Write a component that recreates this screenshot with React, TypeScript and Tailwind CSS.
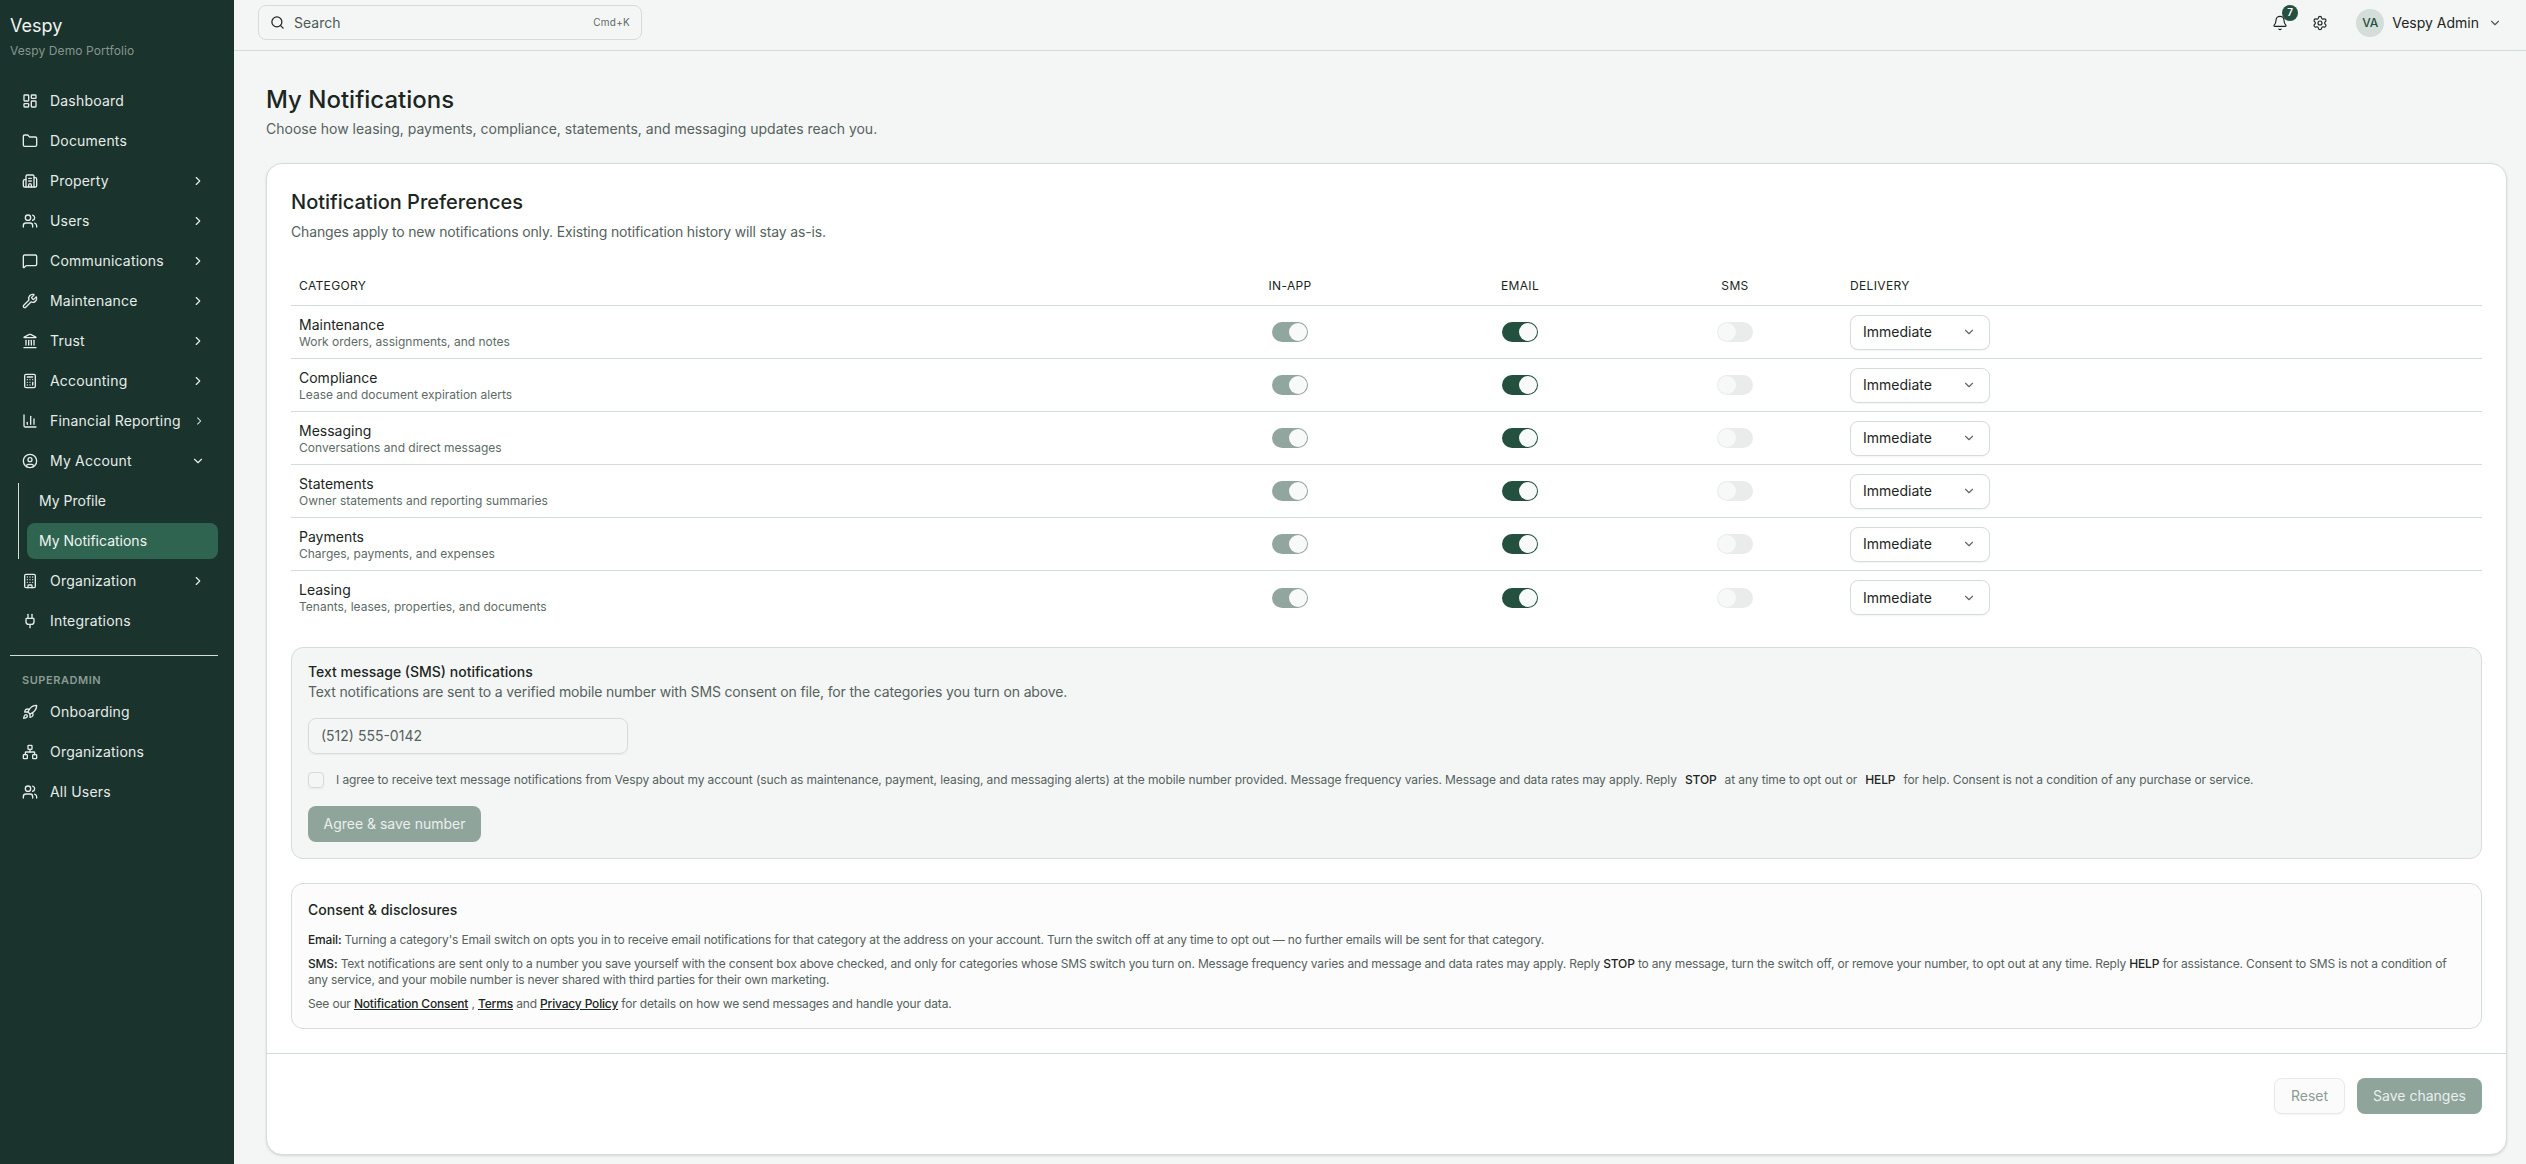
import {
  Bell,
  Building,
  Building2,
  Calculator,
  ChartColumn,
  ChevronDown,
  ChevronRight,
  CircleUser,
  Folder,
  Landmark,
  LayoutDashboard,
  MessageSquare,
  Network,
  Plug,
  Rocket,
  Search,
  Settings,
  Users,
  Wrench,
} from 'lucide-react';

const nav = [
  { label: 'Dashboard', icon: LayoutDashboard },
  { label: 'Documents', icon: Folder },
  { label: 'Property', icon: Building2, more: true },
  { label: 'Users', icon: Users, more: true },
  { label: 'Communications', icon: MessageSquare, more: true },
  { label: 'Maintenance', icon: Wrench, more: true },
  { label: 'Trust', icon: Landmark, more: true },
  { label: 'Accounting', icon: Calculator, more: true },
  { label: 'Financial Reporting', icon: ChartColumn, more: true },
];

const categories = [
  { name: 'Maintenance', desc: 'Work orders, assignments, and notes' },
  { name: 'Compliance', desc: 'Lease and document expiration alerts' },
  { name: 'Messaging', desc: 'Conversations and direct messages' },
  { name: 'Statements', desc: 'Owner statements and reporting summaries' },
  { name: 'Payments', desc: 'Charges, payments, and expenses' },
  { name: 'Leasing', desc: 'Tenants, leases, properties, and documents' },
];

const NavItem = ({ label, icon: Icon, more }: { label: string; icon: typeof Users; more?: boolean }) => (
  <div className="flex h-9 items-center gap-3 rounded-lg px-3 text-sm tracking-[0.2px] text-[#e6ece9]">
    <Icon size={16} strokeWidth={2} className="shrink-0" />
    <span className="flex-1 whitespace-nowrap">{label}</span>
    {more && <ChevronRight size={14} className="mr-px" />}
  </div>
);

const Toggle = ({ state }: { state: 'muted' | 'on' | 'off' }) => {
  if (state === 'off') {
    return (
      <div className="flex h-5 w-9 items-center rounded-full bg-[#e9eceb] pl-px">
        <div className="size-[18px] rounded-full bg-[#f7f8f8]" />
      </div>
    );
  }
  return (
    <div
      className={
        state === 'on'
          ? 'flex h-5 w-9 items-center justify-end rounded-full bg-[#24503f] pr-px'
          : 'flex h-5 w-9 items-center justify-end rounded-full bg-[#91a69e] pr-px'
      }
    >
      <div className="size-[18px] rounded-full bg-[#f8faf9]" />
    </div>
  );
};

export default function App() {
  return (
    <div className="flex h-screen overflow-hidden bg-[#f4f6f5] font-['Inter',sans-serif] text-[#1b2622]">
      {/* Sidebar */}
      <aside className="flex w-[234px] shrink-0 flex-col bg-[#1a332c] pl-[10px] pr-4">
        <div className="pt-[14px]">
          <div className="text-lg leading-[24px] text-[#f1f4f3]">Vespy</div>
          <div className="mt-[5px] text-xs leading-[16px] tracking-[0.1px] text-[#84968f]">Vespy Demo Portfolio</div>
        </div>
        <nav className="mt-6 flex flex-col gap-1">
          {nav.map((item) => (
            <NavItem key={item.label} {...item} />
          ))}
          <div className="flex h-9 items-center gap-3 rounded-lg px-3 text-sm tracking-[0.2px] text-[#e6ece9]">
            <CircleUser size={16} strokeWidth={2} className="shrink-0" />
            <span className="flex-1">My Account</span>
            <ChevronDown size={14} className="mr-px" />
          </div>
          <div className="ml-2 flex flex-col gap-1 border-l border-[#d5ddd9] pl-2">
            <div className="flex h-9 items-center rounded-lg px-3 text-sm text-[#e6ece9]">My Profile</div>
            <div className="flex h-9 items-center rounded-lg bg-[#2f6450] px-3 text-sm text-[#f1f4f3]">My Notifications</div>
          </div>
          <NavItem label="Organization" icon={Building} more />
          <NavItem label="Integrations" icon={Plug} />
        </nav>
        <div className="mt-4 border-t border-[#d5ddd9]" />
        <div className="mt-4 px-3 text-[11px] font-semibold leading-4 tracking-[0.05em] text-[#8b9c95]">SUPERADMIN</div>
        <div className="mt-[6px] flex flex-col gap-1">
          <NavItem label="Onboarding" icon={Rocket} />
          <NavItem label="Organizations" icon={Network} />
          <NavItem label="All Users" icon={Users} />
        </div>
      </aside>

      <div className="flex min-w-0 flex-1 flex-col">
        {/* Top bar */}
        <header className="flex h-[51px] shrink-0 items-center border-b border-[#d5ddd9] pb-[5px] pl-6 pr-6">
          <div className="flex h-[35px] w-[384px] items-center gap-[9px] rounded-lg border border-[#d5ddd9] px-[11px] text-sm text-[#4c5a55]">
            <Search size={15} className="text-[#1b2622]" />
            <span className="flex-1">Search</span>
            <span className="text-[10px] tracking-wide text-[#5d6b66]">Cmd+K</span>
          </div>
          <div className="ml-auto flex items-center">
            <div className="relative">
              <Bell size={16} strokeWidth={1.75} />
              <span className="absolute -right-[10px] -top-[10px] flex size-4 items-center justify-center rounded-full bg-[#24503f] text-[10px] font-semibold text-white">
                7
              </span>
            </div>
            <Settings size={16} strokeWidth={1.75} className="ml-6" />
            <div className="ml-7 flex size-7 items-center justify-center rounded-full bg-[#d5ddd9] text-xs font-medium text-[#24503f]">VA</div>
            <span className="ml-2 text-sm">Vespy Admin</span>
            <ChevronDown size={14} className="ml-[9px] text-[#4c5a55]" />
          </div>
        </header>

        {/* Page */}
        <main className="flex-1 pl-8 pr-[19px] pt-[33px]">
          <h1 className="text-2xl font-medium leading-[32px]">My Notifications</h1>
          <p className="mt-[3px] text-sm leading-5 text-[#55625d]">
            Choose how leasing, payments, compliance, statements, and messaging updates reach you.
          </p>

          <section className="mt-6 h-[992px] rounded-2xl border border-[#d5ddd9] bg-white shadow-sm">
            <div className="px-6 pt-6">
              <h2 className="text-xl font-medium leading-7">Notification Preferences</h2>
              <p className="mt-[6px] text-sm leading-5 tracking-[-0.15px] text-[#55625d]">
                Changes apply to new notifications only. Existing notification history will stay as-is.
              </p>

              {/* Preferences table */}
              <div className="mt-[25px]">
                <div className="grid h-[39px] grid-cols-[884px_230px_230px_200px_1fr] items-center border-b border-[#d5ddd9] text-xs tracking-[0.03em]">
                  <div className="pl-2">CATEGORY</div>
                  <div className="text-center">IN-APP</div>
                  <div className="text-center">EMAIL</div>
                  <div className="text-center">SMS</div>
                  <div className="pl-[15px]">DELIVERY</div>
                </div>
                {categories.map((c, i) => (
                  <div
                    key={c.name}
                    className={
                      i < categories.length - 1
                        ? 'grid h-[53px] grid-cols-[884px_230px_230px_200px_1fr] items-center border-b border-[#d5ddd9]'
                        : 'grid h-[53px] grid-cols-[884px_230px_230px_200px_1fr] items-center'
                    }
                  >
                    <div className="pl-2">
                      <div className="text-sm leading-[17px]">{c.name}</div>
                      <div className="mt-px text-xs leading-[15px] text-[#5d6b66]">{c.desc}</div>
                    </div>
                    <div className="flex justify-center">
                      <Toggle state="muted" />
                    </div>
                    <div className="flex justify-center">
                      <Toggle state="on" />
                    </div>
                    <div className="flex justify-center">
                      <Toggle state="off" />
                    </div>
                    <div className="pl-[15px]">
                      <div className="flex h-[35px] w-[140px] items-center justify-between rounded-lg border border-[#d5ddd9] bg-white pl-3 pr-[13px] text-sm shadow-xs">
                        Immediate
                        <ChevronDown size={14} className="text-[#5d6b66]" />
                      </div>
                    </div>
                  </div>
                ))}
              </div>

              {/* SMS opt-in */}
              <div className="mt-[23px] h-[212px] rounded-xl border border-[#d5ddd9] bg-[#f4f6f5] px-4 pt-[14px]">
                <div className="text-sm font-medium leading-5">Text message (SMS) notifications</div>
                <div className="text-sm leading-5 tracking-[-0.15px] text-[#55625d]">
                  Text notifications are sent to a verified mobile number with SMS consent on file, for the categories you turn on above.
                </div>
                <div className="mt-4 flex h-[36px] w-[320px] items-center rounded-lg border border-[#d5ddd9] px-3 text-sm text-[#55625d] shadow-xs">
                  (512) 555-0142
                </div>
                <div className="mt-[18px] flex items-center gap-3 text-xs tracking-[-0.1px] text-[#55625d]">
                  <div className="size-4 rounded border border-[#d5ddd9] shadow-xs" />
                  <span>
                    I agree to receive text message notifications from Vespy about my account (such as maintenance, payment, leasing, and messaging alerts) at the mobile number provided. Message frequency varies. Message and data rates may apply. Reply
                    <b className="mx-2 font-medium text-[#1b2622]">STOP</b>
                    at any time to opt out or
                    <b className="mx-2 font-medium text-[#1b2622]">HELP</b>
                    for help. Consent is not a condition of any purchase or service.
                  </span>
                </div>
                <div className="mt-[18px] flex h-9 w-[173px] items-center justify-center rounded-lg bg-[#8fa59c] text-sm text-[#e9efec]">
                  Agree &amp; save number
                </div>
              </div>

              {/* Consent */}
              <div className="mt-6 h-[146px] rounded-xl border border-[#d5ddd9] bg-[#fcfcfc] px-4 pt-4 text-xs leading-4 tracking-[-0.17px] text-[#55625d]">
                <div className="text-sm font-medium leading-5 tracking-normal text-[#1b2622]">Consent &amp; disclosures</div>
                <p className="mt-3">
                  <b className="font-medium text-[#1b2622]">Email:</b> Turning a category's Email switch on opts you in to receive email notifications for that category at the address on your account. Turn the switch off at any time to opt out — no further emails will be sent for that category.
                </p>
                <p className="mt-2">
                  <b className="font-medium text-[#1b2622]">SMS:</b> Text notifications are sent only to a number you save yourself with the consent box above checked, and only for categories whose SMS switch you turn on. Message frequency varies and message and data rates may apply. Reply <b className="font-medium text-[#1b2622]">STOP</b> to any message, turn the switch off, or remove your number, to opt out at any time. Reply <b className="font-medium text-[#1b2622]">HELP</b> for assistance. Consent to SMS is not a condition of any service, and your mobile number is never shared with third parties for their own marketing.
                </p>
                <p className="mt-2">
                  See our <a className="font-medium text-[#1b2622] underline">Notification Consent</a> , <a className="font-medium text-[#1b2622] underline">Terms</a> and <a className="font-medium text-[#1b2622] underline">Privacy Policy</a> for details on how we send messages and handle your data.
                </p>
              </div>
            </div>

            {/* Footer */}
            <div className="mt-6 flex justify-end gap-3 border-t border-[#d5ddd9] px-6 pt-6">
              <div className="flex h-9 w-[71px] items-center justify-center rounded-lg border border-[#e6eae8] bg-[#fbfbfb] text-sm text-[#8b9c95] shadow-xs">Reset</div>
              <div className="flex h-9 w-[125px] items-center justify-center rounded-lg bg-[#8fa59c] text-sm text-[#e9efec]">Save changes</div>
            </div>
          </section>
        </main>
      </div>
    </div>
  );
}
